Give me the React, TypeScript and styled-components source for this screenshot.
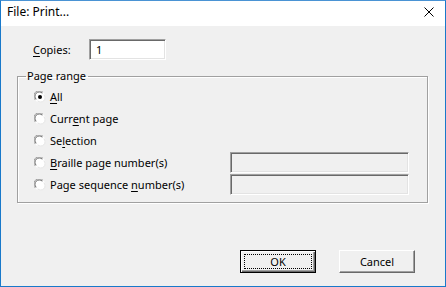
import React from "react";
import styled, { createGlobalStyle } from "styled-components";

const Global = createGlobalStyle`
  html, body { margin: 0; padding: 0; background: #fff; }
  * { box-sizing: border-box; }
`;

const Window = styled.div`
  width: 446px;
  height: 287px;
  border: 1px solid #1979ca;
  border-top-color: #4a93d4;
  display: flex;
  flex-direction: column;
  font-family: "Noto Sans", "DejaVu Sans", sans-serif;
  font-size: 11px;
  color: #000;
  background: #f0f0f0;
  overflow: hidden;
`;

const TitleBar = styled.div`
  height: 25px;
  background: #fff;
  display: flex;
  align-items: center;
  justify-content: space-between;
  padding: 0 11px 0 6px;
  font-size: 12px;
  flex: none;
`;

const Title = styled.span`
  line-height: 1;
  margin-top: -3px;
`;

const CloseIcon = styled.svg`
  width: 10px;
  height: 10px;
  margin-top: -3px;
`;

const Body = styled.div`
  flex: 1;
  display: flex;
  flex-direction: column;
  padding: 13px 17px 13px 16px;
`;

const CopiesRow = styled.div`
  display: flex;
  align-items: center;
  padding-left: 16px;
  height: 21px;
`;

const Label = styled.span`
  width: 56px;
`;

const Sunken = styled.div<{ $w: number; $disabled?: boolean }>`
  width: ${(p) => p.$w}px;
  height: 21px;
  background: ${(p) => (p.$disabled ? "#f0f0f0" : "#fff")};
  border-top: 1px solid #a0a0a0;
  border-left: 1px solid #a0a0a0;
  border-right: 1px solid #fff;
  border-bottom: 1px solid #fff;
  box-shadow: inset 1px 1px 0 #696969, inset -1px -1px 0 #e3e3e3;
  padding: 2px 0 0 6px;
  line-height: 15px;
`;

const Group = styled.fieldset`
  margin: 9px 0 0 0;
  padding: 3px 0 0 16px;
  height: 134px;
  width: 411px;
  border: 1px solid #a0a0a0;
  box-shadow: inset 1px 1px 0 #fff, 1px 1px 0 #fff;
  display: flex;
  flex-direction: column;
`;

const Legend = styled.legend`
  padding: 0 2px 0 1px;
  margin-left: -8px;
  line-height: 14px;
`;

const RadioList = styled.div`
  display: flex;
  flex-direction: column;
  gap: 1px;
`;

const RadioRow = styled.div`
  display: flex;
  align-items: center;
  height: 21px;
`;

const RadioText = styled.span`
  margin-left: 4px;
  width: 180px;
  line-height: 14px;
`;

const U = styled.u`
  text-decoration-thickness: 1px;
  text-underline-offset: 2px;
`;

const Spacer = styled.div`
  flex: 1;
`;

const ButtonRow = styled.div`
  display: flex;
  justify-content: flex-end;
  gap: 23px;
  padding-right: 13px;
`;

const Button = styled.div<{ $default?: boolean }>`
  width: 76px;
  height: 23px;
  display: flex;
  align-items: center;
  justify-content: center;
  position: relative;
  background: #f0f0f0;
  border-top: 1px solid ${(p) => (p.$default ? "#000" : "#fff")};
  border-left: 1px solid ${(p) => (p.$default ? "#000" : "#fff")};
  border-right: 1px solid ${(p) => (p.$default ? "#000" : "#696969")};
  border-bottom: 1px solid ${(p) => (p.$default ? "#000" : "#696969")};
  box-shadow: ${(p) =>
    p.$default
      ? "inset 1px 1px 0 #fff, inset -1px -1px 0 #696969, inset -2px -2px 0 #a0a0a0"
      : "inset -1px -1px 0 #a0a0a0"};
  padding-bottom: 1px;
`;

const Focus = styled.div`
  position: absolute;
  inset: 3px 3px 3px 3px;
  border: 1px dotted #000;
`;

function RadioIcon({ checked }: { checked?: boolean }) {
  return (
    <svg width="12" height="12" viewBox="0 0 12 12">
      <circle cx="6" cy="6" r="5.5" fill="#fff" />
      <path d="M1.3 9 A5.2 5.2 0 0 1 9 1.3" stroke="#a0a0a0" strokeWidth="1" fill="none" />
      <path d="M2.2 8.3 A4.2 4.2 0 0 1 8.3 2.2" stroke="#696969" strokeWidth="1" fill="none" />
      <path d="M10.7 3 A5.2 5.2 0 0 1 3 10.7" stroke="#f0f0f0" strokeWidth="1" fill="none" />
      <path d="M9.8 3.7 A4.2 4.2 0 0 1 3.7 9.8" stroke="#e3e3e3" strokeWidth="1" fill="none" />
      {checked && <circle cx="6" cy="6" r="2" fill="#000" />}
    </svg>
  );
}

const radios: { key: string; label: React.ReactNode; checked?: boolean; field?: boolean }[] = [
  { key: "all", label: <><U>A</U>ll</>, checked: true },
  { key: "cur", label: <>Curr<U>e</U>nt page</> },
  { key: "sel", label: <>Se<U>l</U>ection</> },
  { key: "br", label: <><U>B</U>raille page number(s)</>, field: true },
  { key: "seq", label: <>Page sequence <U>n</U>umber(s)</>, field: true },
];

export default function App() {
  return (
    <>
      <Global />
      <Window>
        <TitleBar>
          <Title>File: Print...</Title>
          <CloseIcon viewBox="0 0 10 10">
            <path d="M0.5 0.5 L9.5 9.5 M9.5 0.5 L0.5 9.5" stroke="#000" strokeWidth="1" />
          </CloseIcon>
        </TitleBar>
        <Body>
          <CopiesRow>
            <Label>
              <U>C</U>opies:
            </Label>
            <Sunken $w={77}>1</Sunken>
          </CopiesRow>
          <Group>
            <Legend>Page range</Legend>
            <RadioList>
              {radios.map((r) => (
                <RadioRow key={r.key}>
                  <RadioIcon checked={r.checked} />
                  <RadioText>{r.label}</RadioText>
                  {r.field && <Sunken $w={179} $disabled />}
                </RadioRow>
              ))}
            </RadioList>
          </Group>
          <Spacer />
          <ButtonRow>
            <Button $default>
              <Focus />
              OK
            </Button>
            <Button>Cancel</Button>
          </ButtonRow>
        </Body>
      </Window>
    </>
  );
}
